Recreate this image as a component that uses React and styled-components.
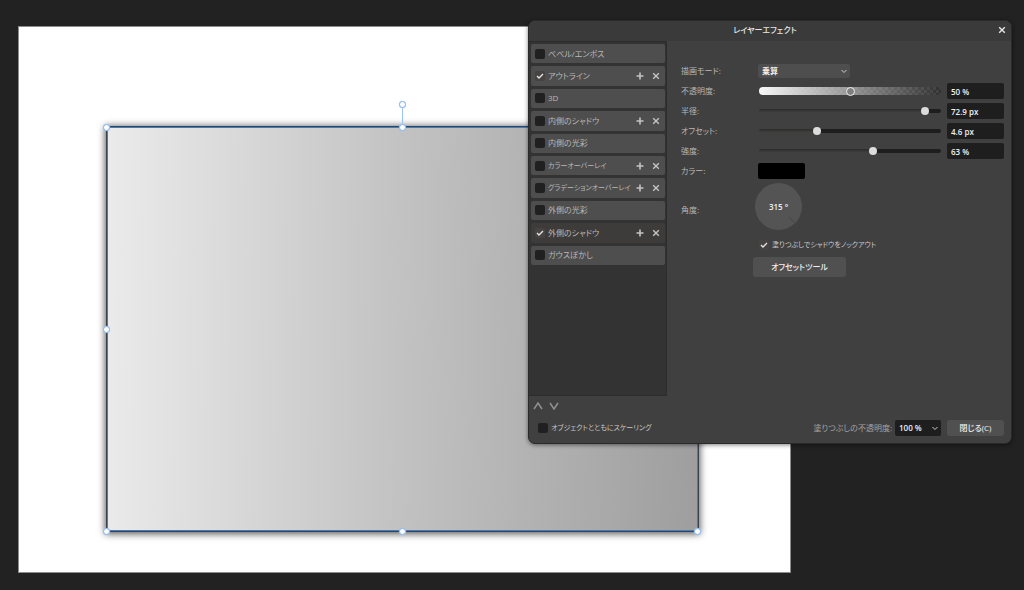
import { useState } from 'react';
import styled, { createGlobalStyle } from 'styled-components';

const GlobalStyle = createGlobalStyle`
  * {
    box-sizing: border-box;
  }

  body {
    margin: 0;
    background-color: #222222;
    color: #b8b8b8;
    font-family: 'Open Sans', 'Noto Sans CJK JP', sans-serif;
    font-size: 8px;
    line-height: 12px;
    font-feature-settings: 'palt';
  }

  button,
  input,
  select {
    margin: 0;
    padding: 0;
    border: 0;
    font: inherit;
    font-feature-settings: inherit;
    color: inherit;
  }
`;

// canvas

const Workspace = styled.main`
  position: relative;
  display: flex;
  height: 100vh;
  min-height: 480px;
  padding: 26px 233px 17px 18px;
  overflow: hidden;
`;

const Paper = styled.div`
  display: flex;
  flex: 1;
  padding: 100px 92px 41px 88px;
  border: 1px solid #8c8c8c;
  background-color: #ffffff;
`;

const Shape = styled.div`
  position: relative;
  flex: 1;
  outline: 1px solid #3f7cc8;
  outline-offset: -1px;
  background: linear-gradient(91deg, #ebebeb, #c4c4c4 47%, #9e9e9e);
  box-shadow:
    0 0 0 1px #3a444f,
    -1px -1px 0 0 #262e38,
    0 1px 7px 2px rgba(0, 0, 0, 0.65);
`;

const Handle = styled.span`
  position: absolute;
  left: ${(props) => props.$x};
  top: ${(props) => props.$y};
  z-index: 1;
  width: 7px;
  height: 7px;
  margin: -3px -4px;
  border: 1px solid #86b4ec;
  border-radius: 50%;
  background-color: #ffffff;
  box-shadow: 0 0 1px #a4c8f4;
`;

const RotateStem = styled.span`
  position: absolute;
  left: 50%;
  top: -20px;
  width: 1px;
  height: 20px;
  margin-left: -1px;
  background-color: #9cc4f2;
`;

// dialog

const Dialog = styled.section`
  position: absolute;
  z-index: 2;
  top: 20px;
  right: 12px;
  width: 484px;
  border: 1px solid #2a2a2a;
  border-radius: 7px;
  background-color: #404040;
  box-shadow: 0 1px 4px rgba(0, 0, 0, 0.5);
  overflow: hidden;
`;

const TitleBar = styled.header`
  display: grid;
  grid-template-columns: 16px 1fr 16px;
  align-items: center;
  height: 20px;
  padding: 0 1px 2px;
  background-color: #3a3a3a;
  color: #e6e6e6;
`;

const Title = styled.h1`
  grid-column: 2;
  margin: 0;
  padding-right: 10px;
  font-size: 8px;
  font-weight: 500;
  text-align: center;
`;

const IconButton = styled.button`
  display: grid;
  place-items: center;
  width: 16px;
  height: 16px;
  background: none;
  color: ${(props) => props.$color || '#c4c4c4'};
`;

const Columns = styled.div`
  display: grid;
  grid-template-columns: 138px 1fr;
`;

const Sidebar = styled.div`
  height: 355px;
  padding: 2px 1px 2px 2px;
  border: solid #2c2c2c;
  border-width: 1px 1px 1px 0;
  background-color: #333333;
`;

const EffectList = styled.ul`
  display: grid;
  grid-template-columns: minmax(0, 1fr);
  grid-auto-rows: 1fr;
  gap: 3px;
  height: 221px;
  margin: 0;
  padding: 0;
  list-style: none;
`;

const EffectItem = styled.li`
  display: flex;
  align-items: center;
  padding: 0 1px 0 4px;
  border-radius: 2px;
  background-color: ${(props) => (props.$selected ? '#3e3c3b' : '#4e4e4e')};

  button {
    flex: none;
  }
`;

const CheckLabel = styled.label`
  display: flex;
  flex: 1;
  align-items: center;
  gap: 3px;
  min-width: 0;
  color: ${(props) => props.$color || '#b8b8b8'};
  font-size: ${(props) => (props.$compact ? 7 : 8)}px;
  white-space: nowrap;
`;

const Checkbox = styled.input`
  appearance: none;
  flex: none;
  width: 10px;
  height: 10px;
  border-radius: 2px;
  background: #202020 center / 10px 10px no-repeat;

  &:checked {
    background-color: #464342;
    background-image: url("data:image/svg+xml,%3Csvg xmlns='http://www.w3.org/2000/svg' viewBox='0 0 10 10'%3E%3Cpath d='M2 5l2 2 4-4' fill='none' stroke='%23e6e6e6' stroke-width='1.3'/%3E%3C/svg%3E");
  }
`;

const Settings = styled.div`
  padding: 20px 7px 0 14px;
`;

const Field = styled.div`
  display: grid;
  grid-template-columns: 77px 1fr 57px;
  align-items: center;
  height: ${(props) => props.$height || 20}px;
`;

const Select = styled.select`
  appearance: none;
  height: ${(props) => props.$height}px;
  width: ${(props) => props.$width}px;
  padding: 0 4px;
  border-radius: 2px;
  background: ${(props) => props.$fill} right 3px center / 6px 6px no-repeat;
  background-image: url("data:image/svg+xml,%3Csvg xmlns='http://www.w3.org/2000/svg' viewBox='0 0 6 6'%3E%3Cpath d='M.5 2L3 4.5 5.5 2' fill='none' stroke='%23cccccc'/%3E%3C/svg%3E");
  color: #f0f0f0;
  font-weight: 600;
`;

const Slider = styled.input`
  appearance: none;
  width: calc(100% - 7px);
  height: 10px;
  margin-left: 1px;
  background: none;

  &::-webkit-slider-runnable-track {
    height: 4px;
    border-radius: 2px;
    background:
      linear-gradient(
        to right,
        transparent ${(props) => props.value}%,
        #1e1e1e ${(props) => props.value}%
      ),
      linear-gradient(#2e2e2e 1px, #3a3938 2px, #434140);
  }

  &::-webkit-slider-thumb {
    appearance: none;
    width: 8px;
    height: 8px;
    margin-top: -2px;
    border-radius: 50%;
    background-color: #dcdcdc;
  }
`;

const OpacitySlider = styled(Slider)`
  &::-webkit-slider-runnable-track {
    height: 8px;
    border-radius: 4px;
    background:
      linear-gradient(to right, #f8f8f8, rgba(244, 244, 244, 0)),
      repeating-conic-gradient(#303030 0 25%, #3e3e3e 0 50%) 0 0 / 6px 6px;
  }

  &::-webkit-slider-thumb {
    width: 9px;
    height: 9px;
    margin-top: 0;
    border: 1px solid #f0f0f0;
    background-color: #808080;
  }
`;

const ValueBox = styled.input`
  width: 57px;
  height: 16px;
  padding: 0 4px;
  border-radius: 2px;
  background-color: #1e1e1e;
  color: #f0f0f0;
  font-weight: 600;
`;

const ColorWell = styled.button`
  width: 47px;
  height: 16px;
  border-radius: 2px;
  background-color: #000000;
`;

const Dial = styled.div`
  position: relative;
  display: grid;
  place-items: center;
  align-self: start;
  width: 47px;
  height: 47px;
  margin: 2px 0 0 -3px;
  border-radius: 50%;
  background-color: #545454;

  svg {
    position: absolute;
    inset: 0;
  }
`;

const DialInput = styled.input`
  position: relative;
  width: 30px;
  background: none;
  color: #f0f0f0;
  font-weight: 600;
  text-align: center;
`;

const Extras = styled.div`
  display: grid;
  gap: 6px;
  justify-items: start;
  padding: 1px 0 0 72px;

  label {
    padding-left: 6px;
  }
`;

const Button = styled.button`
  width: ${(props) => props.$width}px;
  height: ${(props) => props.$height}px;
  border-radius: 3px;
  background-color: #505050;
  color: #f0f0f0;
  font-weight: 500;
`;

const OrderButtons = styled.div`
  display: flex;
  height: 20px;
  align-items: center;
  padding-left: 1px;
`;

const Footer = styled.footer`
  display: flex;
  align-items: center;
  gap: 6px;
  padding: 4px 7px 7px 9px;
`;

const FillOpacity = styled.label`
  display: flex;
  align-items: center;
  gap: 3px;
  color: #a4a4a4;
`;

const PlusIcon = () => (
  <svg width="8" height="8" viewBox="0 0 8 8" stroke="currentColor" strokeWidth="1.6">
    <path d="M4 .5v7M.5 4h7" />
  </svg>
);

const CrossIcon = () => (
  <svg width="8" height="8" viewBox="0 0 8 8" stroke="currentColor" strokeWidth="1.4">
    <path d="M1.2 1.2l5.6 5.6M6.8 1.2L1.2 6.8" />
  </svg>
);

const ArrowIcon = ({ down }) => (
  <svg width="10" height="8" viewBox="0 0 10 8" fill="none" stroke="currentColor" strokeWidth="1.5">
    <path d={down ? 'M1 1l4 6 4-6' : 'M1 7l4-6 4 6'} />
  </svg>
);

const effects = [
  { name: 'ベベル/エンボス' },
  { name: 'アウトライン', multi: true },
  { name: '3D' },
  { name: '内側のシャドウ', multi: true },
  { name: '内側の光彩' },
  { name: 'カラーオーバーレイ', multi: true },
  { name: 'グラデーションオーバーレイ', multi: true },
  { name: '外側の光彩' },
  { name: '外側のシャドウ', multi: true },
  { name: 'ガウスぼかし' },
];

const handles = [
  ['0%', '0%'],
  ['50%', '0%'],
  ['0%', '50%'],
  ['100%', '50%'],
  ['0%', '100%'],
  ['50%', '100%'],
  ['100%', '100%'],
];

const sliders = [
  { id: 'opacity', name: '不透明度:', position: 50, text: '50 %' },
  { id: 'radius', name: '半径:', position: 93, text: '72.9 px' },
  { id: 'offset', name: 'オフセット:', position: 31, text: '4.6 px' },
  { id: 'intensity', name: '強度:', position: 63, text: '63 %' },
];

const SliderField = ({ id, name, position, text }) => {
  const [value, setValue] = useState(position);
  const Range = id === 'opacity' ? OpacitySlider : Slider;

  return (
    <Field>
      <label htmlFor={id}>{name}</label>
      <Range id={id} type="range" value={value} onChange={(e) => setValue(Number(e.target.value))} />
      <ValueBox aria-label={name} defaultValue={text} />
    </Field>
  );
};

const EffectSidebar = () => {
  const [enabled, setEnabled] = useState([1, 8]);

  const toggle = (index) => {
    setEnabled(enabled.includes(index) ? enabled.filter((i) => i !== index) : [...enabled, index]);
  };

  return (
    <Sidebar>
      <EffectList>
        {effects.map((effect, index) => (
          <EffectItem key={effect.name} $selected={index === 8}>
            {/* long names go one size down so they clear the + button */}
            <CheckLabel $compact={effect.name.length > 8}>
              <Checkbox type="checkbox" checked={enabled.includes(index)} onChange={() => toggle(index)} />
              {effect.name}
            </CheckLabel>
            {effect.multi && (
              <>
                <IconButton aria-label="追加"><PlusIcon /></IconButton>
                <IconButton aria-label="削除"><CrossIcon /></IconButton>
              </>
            )}
          </EffectItem>
        ))}
      </EffectList>
    </Sidebar>
  );
};

const App = () => {
  return (
    <>
      <GlobalStyle />
      <Workspace>
        <Paper>
          <Shape>
            <RotateStem />
            <Handle $x="50%" $y="-23px" />
            {handles.map(([x, y]) => (
              <Handle key={x + y} $x={x} $y={y} />
            ))}
          </Shape>
        </Paper>

        <Dialog>
          <TitleBar>
            <Title>レイヤーエフェクト</Title>
            <IconButton aria-label="閉じる" $color="#e6e6e6"><CrossIcon /></IconButton>
          </TitleBar>

          <Columns>
            <EffectSidebar />
            <Settings>
              <Field>
                <label htmlFor="blend">描画モード:</label>
                <Select id="blend" $width={92} $height={14} $fill="#4e4e4e">
                  <option>乗算</option>
                </Select>
              </Field>
              {sliders.map((slider) => (
                <SliderField key={slider.id} {...slider} />
              ))}
              <Field>
                <label htmlFor="color">カラー:</label>
                <ColorWell id="color" />
              </Field>
              <Field $height={57}>
                <label htmlFor="angle">角度:</label>
                <Dial>
                  <svg viewBox="0 0 47 47" stroke="#444444">
                    <path d="M34 34l6 6" />
                  </svg>
                  <DialInput id="angle" defaultValue="315 °" />
                </Dial>
              </Field>
              <Extras>
                <CheckLabel $compact $color="#c8c8c8">
                  <Checkbox type="checkbox" defaultChecked />
                  塗りつぶしでシャドウをノックアウト
                </CheckLabel>
                <Button $width={93} $height={20}>オフセットツール</Button>
              </Extras>
            </Settings>
          </Columns>

          <OrderButtons>
            <IconButton aria-label="上へ" $color="#909090"><ArrowIcon /></IconButton>
            <IconButton aria-label="下へ" $color="#909090"><ArrowIcon down /></IconButton>
          </OrderButtons>

          <Footer>
            <CheckLabel $compact $color="#c8c8c8">
              <Checkbox type="checkbox" />
              オブジェクトとともにスケーリング
            </CheckLabel>
            <FillOpacity>
              塗りつぶしの不透明度:
              <Select $width={46} $height={16} $fill="#1e1e1e">
                <option>100 %</option>
              </Select>
            </FillOpacity>
            <Button $width={57} $height={16}>閉じる(C)</Button>
          </Footer>
        </Dialog>
      </Workspace>
    </>
  );
};

export default App;
